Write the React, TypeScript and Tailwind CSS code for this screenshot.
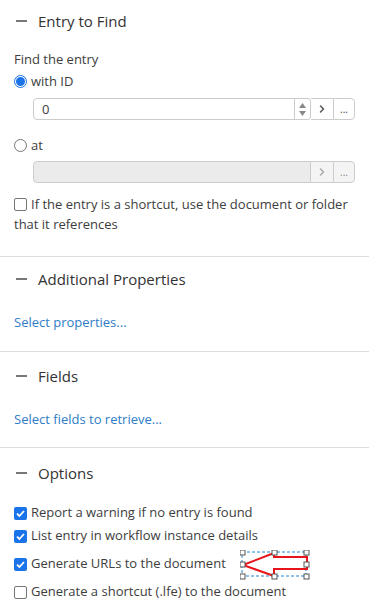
import { ChevronRight } from "lucide-react";

function Minus() {
  return <span className="block w-[11px] h-[2px] bg-[#777] ml-[16px] mr-[11px]" />;
}

function SectionHeader({ title, className }: { title: string; className: string }) {
  return (
    <div className={`flex items-center ${className}`}>
      <Minus />
      <span className="text-[15px] font-medium text-[#333]">{title}</span>
    </div>
  );
}

function Radio({ checked }: { checked?: boolean }) {
  return (
    <span
      className={`w-[13px] h-[13px] rounded-full border flex items-center justify-center shrink-0 ${
        checked ? "border-[#1a73e8]" : "border-[#767676]"
      }`}
    >
      {checked && <span className="w-[9px] h-[9px] rounded-full bg-[#1a73e8]" />}
    </span>
  );
}

function Check({ checked, inline }: { checked?: boolean; inline?: boolean }) {
  if (!checked)
    return (
      <span
        className={`w-[13px] h-[13px] rounded-[2px] border border-[#767676] bg-white shrink-0 ${
          inline ? "inline-block align-[-2px]" : "block"
        }`}
      />
    );
  return (
    <span className="w-[13px] h-[13px] rounded-[2px] bg-[#1a73e8] flex items-center justify-center shrink-0">
      <svg width="11" height="11" viewBox="0 0 11 11">
        <path d="M2 5.6 L4.4 8 L9 3" fill="none" stroke="white" strokeWidth="1.8" />
      </svg>
    </span>
  );
}

function Spinner() {
  return (
    <div className="w-[16px] border-l border-[#ccc] flex flex-col items-center justify-center gap-[3px]">
      <svg width="7" height="5" viewBox="0 0 7 5">
        <path d="M0 5 L3.5 0 L7 5 Z" fill="#888" />
      </svg>
      <svg width="7" height="5" viewBox="0 0 7 5">
        <path d="M0 0 L3.5 5 L7 0 Z" fill="#888" />
      </svg>
    </div>
  );
}

function ArrowNote() {
  const handles = [
    [2, 2], [34, 2], [66, 2],
    [2, 14], [66, 14],
    [2, 26], [34, 26], [66, 26],
  ];
  return (
    <svg className="absolute left-[226px] top-[-3px]" width="70" height="30" viewBox="0 0 70 30">
      <rect x="2" y="2" width="64" height="24" fill="none" stroke="#1f86d8" strokeWidth="1" strokeDasharray="3 2" />
      <path
        d="M3 15 L34 3 L34 7 L67 7 L67 19 L34 19 L34 26 Z"
        fill="white"
        stroke="#e8141c"
        strokeWidth="2"
        strokeLinejoin="miter"
      />
      {handles.map(([x, y], i) => (
        <rect key={i} x={x - 2} y={y - 2} width="5" height="5" fill="white" stroke="#555" strokeWidth="1" />
      ))}
    </svg>
  );
}

export default function App() {
  return (
    <div
      className="w-[369px] bg-white text-[13px] text-[#3d3d3d]"
      style={{ fontFamily: '"Open Sans", "Liberation Sans", sans-serif' }}
    >
      {/* Entry to Find */}
      <div className="border-b border-[#ddd] pb-[22px]">
        <SectionHeader title="Entry to Find" className="h-[42px]" />
        <div className="px-[14px] mt-[6px]">
          <div className="leading-[22px]">Find the entry</div>
          <div className="flex items-center gap-[4px] leading-[22px]">
            <Radio checked />
            <span>with ID</span>
          </div>
          <div className="flex ml-[19px] mt-[6px] h-[22px]">
            <div className="flex flex-1 border border-[#ccc] rounded-l-[4px] rounded-r-[3px]">
              <span className="flex-1 px-[8px] leading-[20px]">0</span>
              <Spinner />
            </div>
            <div className="w-[22px] border-y border-[#ccc] flex items-center justify-center">
              <ChevronRight size={12} strokeWidth={3} color="#555" />
            </div>
            <div className="w-[22px] border border-[#ccc] rounded-r-[4px] flex items-center justify-center text-[10px] text-[#444]">
              ...
            </div>
          </div>
          <div className="flex items-center gap-[4px] leading-[22px] mt-[14px]">
            <Radio />
            <span>at</span>
          </div>
          <div className="flex ml-[19px] mt-[5px] h-[22px]">
            <div className="flex-1 border border-[#ccc] bg-[#ebebeb] rounded-l-[4px]" />
            <div className="w-[22px] border-y border-[#ccc] bg-[#f4f4f4] flex items-center justify-center">
              <ChevronRight size={12} strokeWidth={3} color="#aaa" />
            </div>
            <div className="w-[22px] border border-[#ccc] bg-[#f4f4f4] rounded-r-[4px] flex items-center justify-center text-[10px] text-[#888]">
              ...
            </div>
          </div>
          <div className="mt-[11px] leading-[20px]">
            <Check inline />
            <span className="ml-[4px]">If the entry is a shortcut, use the document or folder that it references</span>
          </div>
        </div>
      </div>

      {/* Additional Properties */}
      <div className="border-b border-[#ddd] pb-[19px]">
        <SectionHeader title="Additional Properties" className="h-[44px]" />
        <div className="px-[14px] mt-[11px] leading-[20px] text-[#2d7dc8]">Select properties...</div>
      </div>

      {/* Fields */}
      <div className="border-b border-[#ddd] pb-[18px]">
        <SectionHeader title="Fields" className="h-[48px]" />
        <div className="px-[14px] mt-[9px] leading-[20px] text-[#2d7dc8]">Select fields to retrieve...</div>
      </div>

      {/* Options */}
      <div className="pb-[14px]">
        <SectionHeader title="Options" className="h-[50px]" />
        <div className="px-[14px] mt-[4px] flex flex-col">
          <label className="flex items-center gap-[4px] h-[22px]">
            <Check checked />
            <span>Report a warning if no entry is found</span>
          </label>
          <label className="flex items-center gap-[4px] h-[22px] mt-[1px]">
            <Check checked />
            <span>List entry in workflow instance details</span>
          </label>
          <label className="relative flex items-center gap-[4px] h-[22px] mt-[6px]">
            <Check checked />
            <span>Generate URLs to the document</span>
            <ArrowNote />
          </label>
          <label className="flex items-center gap-[4px] h-[22px] mt-[6px]">
            <Check />
            <span>Generate a shortcut (.lfe) to the document</span>
          </label>
        </div>
      </div>
    </div>
  );
}
